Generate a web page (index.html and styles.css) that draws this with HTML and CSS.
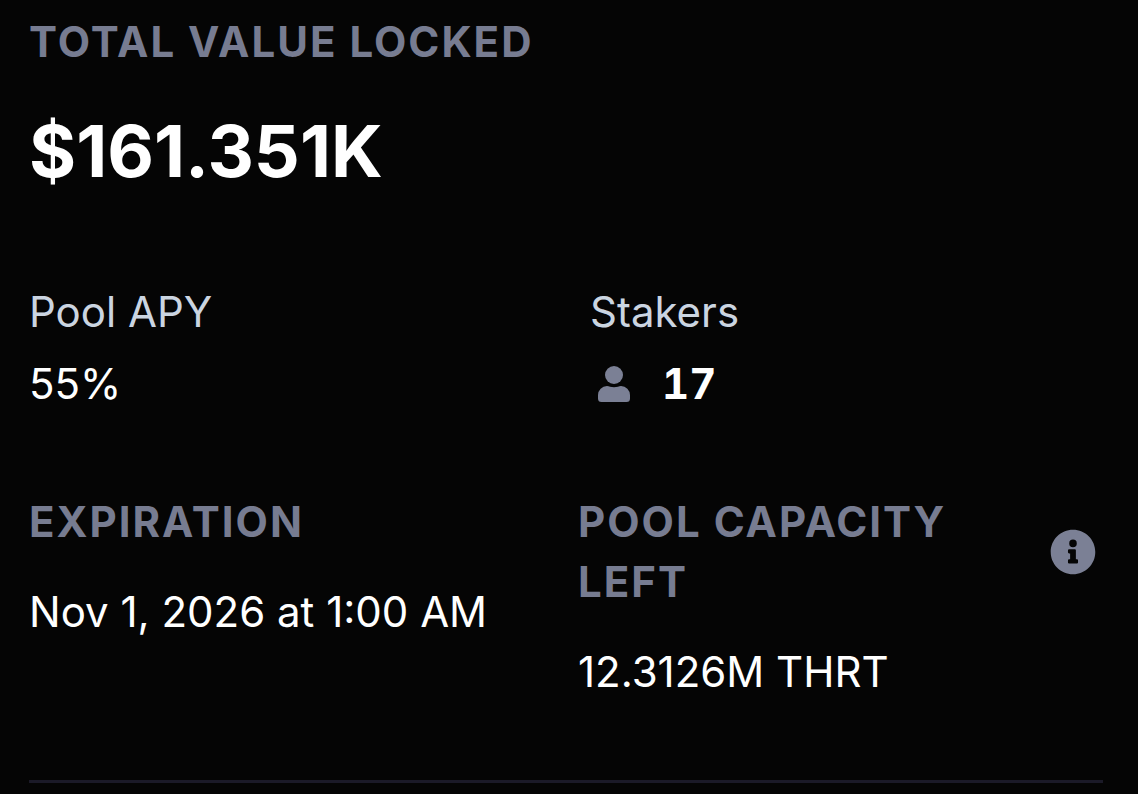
FILE: index.html
```html
<!DOCTYPE html>
<html lang="en">
<head>
<meta charset="utf-8">
<meta name="viewport" content="width=device-width, initial-scale=1">
<title>Staking pool</title>
<link rel="stylesheet" href="styles.css">
</head>
<body>
<main class="pool">
  <section class="total">
    <h2 class="label">Total value locked</h2>
    <p class="amount">$161.351K</p>
  </section>
  <div class="row stats">
    <section class="cell">
      <h3 class="name">Pool APY</h3>
      <p class="value">55%</p>
    </section>
    <section class="cell stakers">
      <h3 class="name">Stakers</h3>
      <p class="value count">
        <svg class="person" viewBox="0 0 32 36" aria-hidden="true"><circle cx="16" cy="9" r="9"/><path d="M9 20c2 0 4 1.300 7 1.300s5-1.300 7-1.300a9 9 0 0 1 9 9v3.500a3.500 3.500 0 0 1-3.500 3.500h-25A3.500 3.500 0 0 1 0 32.500V29a9 9 0 0 1 9-9z"/></svg>
        <strong>17</strong>
      </p>
    </section>
  </div>
  <div class="row details">
    <section class="cell">
      <h2 class="label">Expiration</h2>
      <p class="value">Nov 1, 2026 at 1:00 AM</p>
    </section>
    <section class="cell">
      <div class="heading">
        <h2 class="label">Pool capacity left</h2>
        <button class="info" type="button" aria-label="About pool capacity">
          <svg viewBox="0 0 512 512" aria-hidden="true"><path d="M256 8C119 8 8 119 8 256s111 248 248 248 248-111 248-248S393 8 256 8zm0 110a42 42 0 1 1 0 84 42 42 0 0 1 0-84zm56 254a12 12 0 0 1-12 12h-88a12 12 0 0 1-12-12v-24a12 12 0 0 1 12-12h12v-64h-12a12 12 0 0 1-12-12v-24a12 12 0 0 1 12-12h64a12 12 0 0 1 12 12v100h12a12 12 0 0 1 12 12z"/></svg>
        </button>
      </div>
      <p class="value">12.3126M THRT</p>
    </section>
  </div>
</main>
</body>
</html>
```

FILE: styles.css
```css
* {
  box-sizing: border-box;
}

body {
  margin: 0;
  background: #050505;
  color: #fff;
  font-family: Inter, "Liberation Sans", sans-serif;
  font-size: 42px;
  line-height: 60px;
}

h2,
h3,
p {
  margin: 0;
}

.pool {
  margin: 0 35px 0 29px;
  padding: 12px 0 78px;
  border-bottom: 3px solid #1b1a28;
}

.label {
  color: #777c91;
  font-size: 42px;
  font-weight: 700;
  letter-spacing: 2px;
  text-transform: uppercase;
}

.amount {
  margin-top: 30px;
  font-size: 72px;
  font-weight: 700;
  line-height: 98px;
}

.row {
  display: grid;
  grid-template-columns: 1fr 1fr;
  column-gap: 24px;
}

.stats {
  margin-top: 82px;
}

.stakers {
  padding-left: 12px;
}

.name {
  color: #cbd5e1;
  font-size: 42px;
  font-weight: 400;
}

.stats .value {
  margin-top: 12px;
}

.count {
  display: flex;
  align-items: center;
  gap: 32px;
  padding-left: 8px;
  font-variant-numeric: tabular-nums;
}

.person {
  width: 32px;
  height: 36px;
  fill: #7b8095;
}

.details {
  margin-top: 78px;
}

.details .value {
  margin-top: 30px;
}

.heading {
  display: flex;
  align-items: center;
  justify-content: space-between;
  gap: 24px;
  padding-right: 7px;
}

.info {
  flex: none;
  width: 46px;
  height: 46px;
  padding: 0;
  border: 0;
  background: none;
  color: #7b8095;
  cursor: pointer;
}

.info svg {
  display: block;
  fill: currentColor;
}
```
